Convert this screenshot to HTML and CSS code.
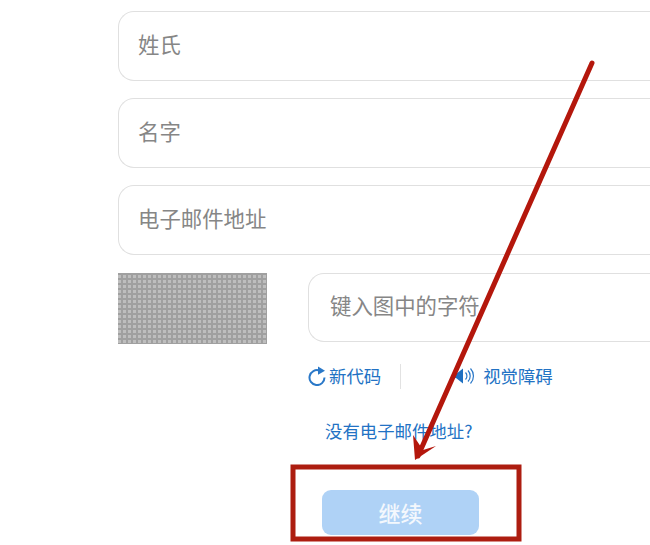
FILE: index.html
```html
<!DOCTYPE html>
<html lang="zh">
<head>
<meta charset="utf-8">
<title>注册</title>
<link rel="stylesheet" href="styles.css">
</head>
<body>
<main class="form">
  <div class="field">姓氏</div>
  <div class="field">名字</div>
  <div class="field">电子邮件地址</div>
  <div class="captcha-row">
    <div class="captcha-img"></div>
    <div class="captcha-side">
      <div class="field">键入图中的字符</div>
      <div class="captcha-links">
        <a class="link new-code">
          <svg class="ico" viewBox="0 0 18 20" width="18" height="20"><path d="M11.500 4.500A7.500 7.500 0 1 0 16.500 11.500" fill="none" stroke="#2a78c8" stroke-width="2"/><path d="M10 .5l7 4.200-7 4z" fill="#2a78c8"/></svg>
          <span>新代码</span>
        </a>
        <span class="sep"></span>
        <a class="link vision">
          <svg class="ico" viewBox="0 0 24 20" width="24" height="20"><path d="M0 8h4l7-5.500v15L4 12H0z" fill="#1f70c1"/><path d="M13.500 6.500a5 5 0 0 1 0 7M16 4.500a8 8 0 0 1 0 11M18.500 2.500a11 11 0 0 1 0 15" fill="none" stroke="#2a78c8" stroke-width="1.200"/></svg>
          <span>视觉障碍</span>
        </a>
      </div>
    </div>
  </div>
  <div class="no-email"><a class="link">没有电子邮件地址?</a></div>
  <div class="actions"><button class="continue" type="button">继续</button></div>
</main>
<svg class="overlay" viewBox="0 0 650 545" width="650" height="545">
  <path d="M592 63 418 456" fill="none" stroke="#b4170c" stroke-width="5" stroke-linecap="round"/>
  <path d="M415 460l-2-25 10 15 13-4z" fill="#b4170c"/>
  <rect x="293" y="467" width="226" height="72" fill="none" stroke="#ad1d10" stroke-width="5"/>
</svg>
</body>
</html>
```
FILE: styles.css
```css
* { box-sizing: border-box; }
html, body { margin: 0; padding: 0; }
body {
  width: 650px;
  height: 545px;
  overflow: hidden;
  position: relative;
  background: #fff;
  font-family: "Noto Sans CJK SC", "Liberation Sans", sans-serif;
}
.form {
  width: 532px;
  margin-left: 118px;
  padding-top: 11px;
  display: flex;
  flex-direction: column;
}
.field {
  height: 70px;
  margin-bottom: 17px;
  padding: 0 0 6px 19px;
  border: 1px solid #e0e0e0;
  border-right: 0;
  border-radius: 16px 0 0 16px;
  display: flex;
  align-items: center;
  font-size: 21.4px;
  color: #868686;
  background: #fff;
}
.captcha-row {
  display: flex;
  gap: 41px;
  margin-top: 1px;
}
.captcha-img {
  width: 149px;
  height: 71px;
  flex: none;
  background-color: #bebebe;
  background-image:
    linear-gradient(90deg, transparent 0 3px, #a0a0a0 3px),
    linear-gradient(0deg, transparent 0 3px, #a0a0a0 3px);
  background-size: 5px 5px;
}
.captcha-side { flex: 1; }
.captcha-side .field { margin-bottom: 0; padding: 0 0 7px 21px; height: 69px; }
.captcha-links {
  display: flex;
  align-items: center;
  margin-top: 21px;
  height: 26px;
}
.link {
  color: #2272c4;
  font-size: 17.4px;
  display: inline-flex;
  align-items: center;
}
.new-code { gap: 3px; }
.new-code span, .vision span { position: relative; top: -1px; }
.vision { gap: 7px; margin-left: 51px; }
.sep {
  width: 1px;
  height: 25px;
  margin-left: 19px;
  background: #e2e2e2;
}
.no-email {
  margin-top: 28px;
  margin-left: 207px;
  height: 26px;
  display: flex;
  align-items: center;
}
.actions {
  margin-top: 47px;
  margin-left: 204px;
}
.continue {
  width: 157px;
  height: 45px;
  padding: 0 0 2px;
  border: 0;
  border-radius: 9px;
  background: #afd2f6;
  color: #f4f8fd;
  font: 500 22px "Noto Sans CJK SC", sans-serif;
}
.overlay {
  position: absolute;
  left: 0;
  top: 0;
  pointer-events: none;
}
```
